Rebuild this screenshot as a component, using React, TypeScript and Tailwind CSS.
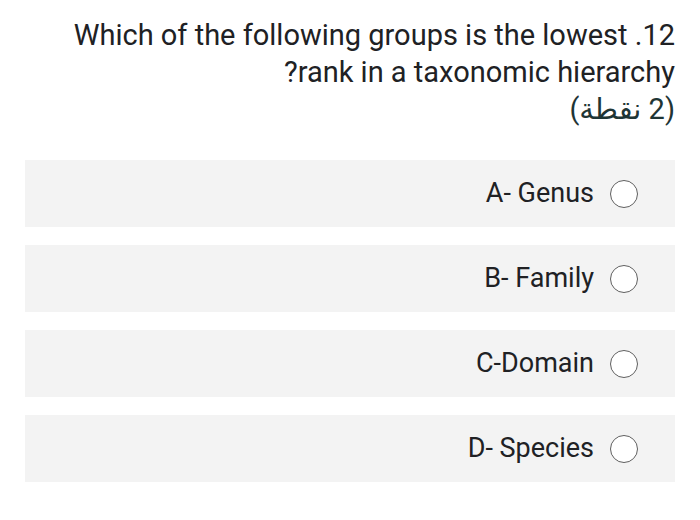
import React from "react";

const options = ["A- Genus", "B- Family", "C-Domain", "D- Species"];

export default function App() {
  return (
    <div
      dir="rtl"
      className="w-[700px] h-[520px] bg-white overflow-hidden"
      style={{ fontFamily: 'Roboto, "DejaVu Sans", sans-serif' }}
    >
      <div className="pt-[17px] pr-[25px] pl-[25px] text-[29px] leading-[37px] text-[#202124]">
        <div>12. Which of the following groups is the lowest</div>
        <div>rank in a taxonomic hierarchy?</div>
        <div className="text-[#1f3535]">(2 نقطة)</div>
      </div>
      <div className="mt-[32px] mx-[25px] flex flex-col gap-[18px]">
        {options.map((o) => (
          <div
            key={o}
            className="h-[67px] bg-[#f3f3f3] flex items-center pr-[37px] gap-[16px]"
          >
            <div className="w-[28px] h-[28px] rounded-full border-[1.5px] border-[#5f5f5f] bg-white shrink-0" />
            <div className="text-[27px] text-[#202124]">{o}</div>
          </div>
        ))}
      </div>
    </div>
  );
}
